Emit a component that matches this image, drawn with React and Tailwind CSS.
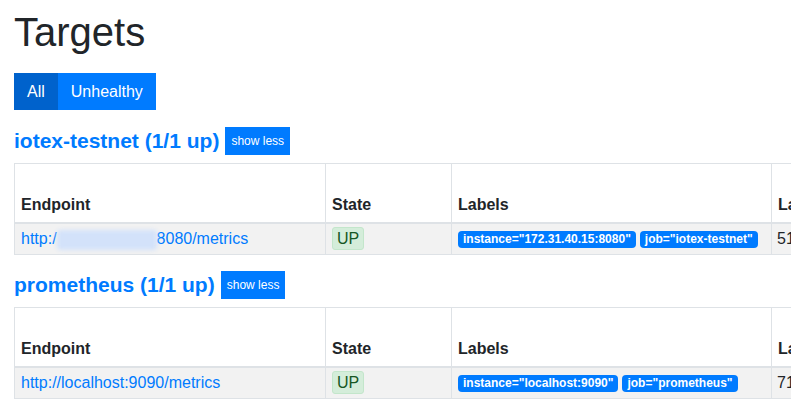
import React from 'react';

const pools = [
  {
    name: 'iotex-testnet',
    up: '1/1 up',
    endpoint: { pre: 'http:/', hidden: true, post: '8080/metrics' },
    labels: ['instance="172.31.40.15:8080"', 'job="iotex-testnet"'],
    last: '51s ago',
  },
  {
    name: 'prometheus',
    up: '1/1 up',
    endpoint: { pre: 'http://localhost:9090/metrics', hidden: false, post: '' },
    labels: ['instance="localhost:9090"', 'job="prometheus"'],
    last: '71s ago',
  },
];

const PoolPanel = ({ pool }) => (
  <div className="mb-[14px]">
    <div className="flex items-center gap-[6px] h-[32px] mb-[6px]">
      <a className="text-[21px] font-bold text-[#007bff] leading-[1.2]">
        {pool.name} ({pool.up})
      </a>
      <button className="bg-[#007bff] text-white text-[12px] leading-[20px] px-[6px] py-[4px]">
        show less
      </button>
    </div>
    <table className="border-collapse text-[16px] text-[#212529] w-[1000px] table-fixed">
      <thead>
        <tr className="h-[59px]">
          <th className="w-[311px] border border-[#dee2e6] border-b-2 align-bottom text-left font-bold px-[6px] pb-[5px]">Endpoint</th>
          <th className="w-[126px] border border-[#dee2e6] border-b-2 align-bottom text-left font-bold px-[6px] pb-[5px]">State</th>
          <th className="w-[320px] border border-[#dee2e6] border-b-2 align-bottom text-left font-bold px-[6px] pb-[5px]">Labels</th>
          <th className="w-[120px] border border-[#dee2e6] border-b-2 align-bottom text-left font-bold px-[6px] pb-[5px]">Last Scrape</th>
          <th className="w-[123px] border border-[#dee2e6] border-b-2 align-bottom text-left font-bold px-[6px] pb-[5px]">Error</th>
        </tr>
      </thead>
      <tbody>
        <tr className="bg-[#f2f2f2] h-[32px]">
          <td className="border border-[#dee2e6] px-[6px] whitespace-nowrap">
            <a className="text-[#007bff]">
              {pool.endpoint.pre}
              {pool.endpoint.hidden && (
                <span className="inline-block align-middle w-[100px] h-[20px] bg-[#d3e2fa] blur-[2px] rounded-[4px]"></span>
              )}
              {pool.endpoint.post}
            </a>
          </td>
          <td className="border border-[#dee2e6] px-[6px]">
            <span className="inline-block bg-[#d4edda] border border-[#c3e6cb] text-[#155724] rounded-[3px] px-[4px] leading-[21px]">UP</span>
          </td>
          <td className="border border-[#dee2e6] px-[6px] whitespace-nowrap">
            {pool.labels.map((l) => (
              <span key={l} className="inline-block bg-[#007bff] text-white text-[12px] font-bold rounded-[4px] px-[5px] leading-[17px] mr-[4px] align-middle">
                {l}
              </span>
            ))}
          </td>
          <td className="border border-[#dee2e6] px-[5px] whitespace-nowrap">{pool.last}</td>
          <td className="border border-[#dee2e6] px-[6px]"></td>
        </tr>
      </tbody>
    </table>
  </div>
);

export default function App() {
  return (
    <div className="w-screen h-screen overflow-hidden bg-white" style={{ fontFamily: '"Liberation Sans", Arial, sans-serif' }}>
      <div className="pl-[14px] pt-[8px]">
        <h1 className="text-[40px] leading-[48px] font-normal text-[#212529] mb-[17px]">Targets</h1>
        <div className="flex mb-[15px]">
          <button className="bg-[#0062cc] text-white text-[16px] leading-[24px] px-[13px] py-[6px] h-[37px]">All</button>
          <button className="bg-[#007bff] text-white text-[16px] leading-[24px] px-[13px] py-[6px] h-[37px]">Unhealthy</button>
        </div>
        {pools.map((p) => (
          <PoolPanel key={p.name} pool={p} />
        ))}
      </div>
    </div>
  );
}
